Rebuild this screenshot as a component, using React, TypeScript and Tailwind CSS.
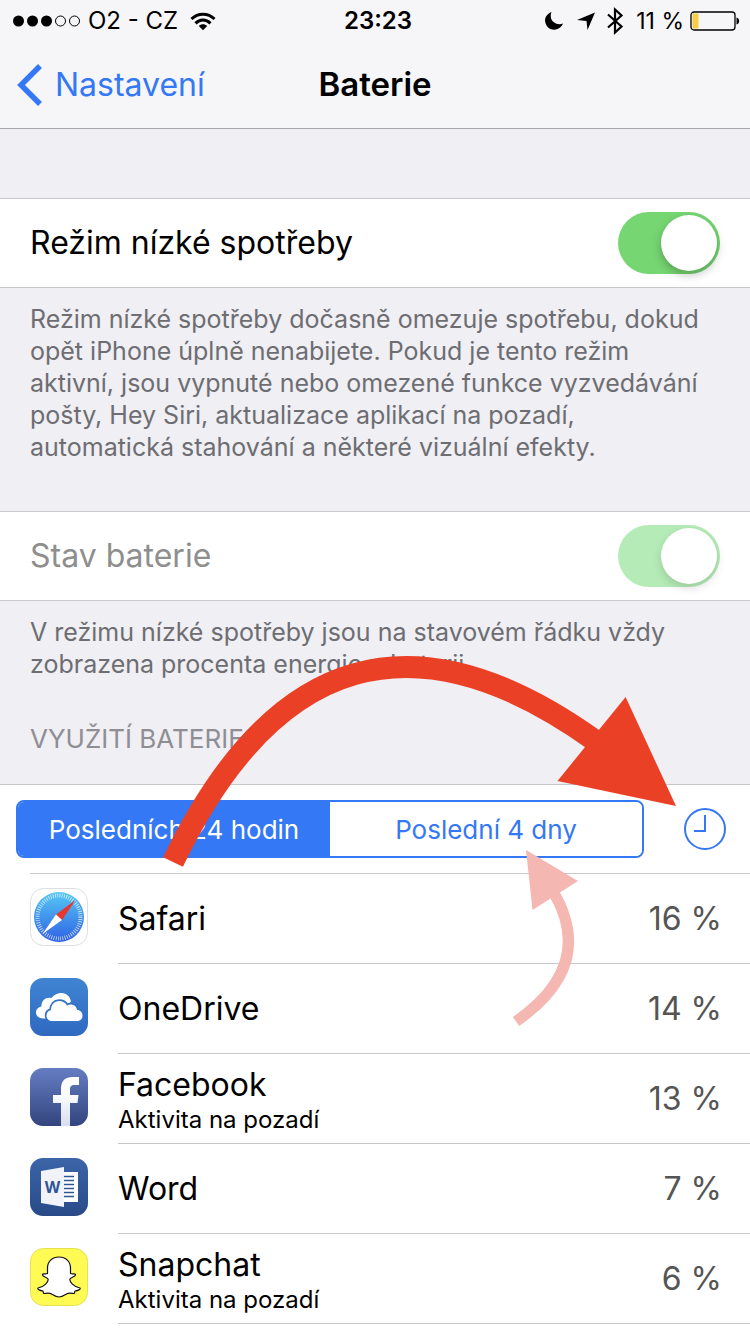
import { useState } from 'react';
import type { ReactNode } from 'react';

type Usage = {
  name: string;
  percent: string;
  background?: boolean;
  icon: ReactNode;
};

function SafariIcon() {
  return (
    <svg viewBox="0 0 58 58" className="size-[58px]" aria-hidden="true">
      <defs>
        <linearGradient id="safari" x1="0" y1="0" x2="0" y2="1">
          <stop offset="0" stopColor="#56c8f5" />
          <stop offset="1" stopColor="#2f61e4" />
        </linearGradient>
      </defs>
      <rect x="0.5" y="0.5" width="57" height="57" rx="13" fill="#fff" stroke="#dedede" />
      <circle cx="29" cy="29" r="25" fill="url(#safari)" />
      <circle cx="29" cy="29" r="21.5" fill="none" stroke="#fff" strokeWidth="4" strokeDasharray="0.75 1.5" opacity="0.8" />
      <path d="M45.5 12 L32 32 L26 26.5 Z" fill="#e8382d" />
      <path d="M12.5 46 L26 26.5 L32 32 Z" fill="#fff" />
    </svg>
  );
}

function OneDriveIcon() {
  return (
    <svg viewBox="0 0 58 58" className="size-[58px]" aria-hidden="true">
      <defs>
        <linearGradient id="onedrive" x1="0" y1="0" x2="0" y2="1">
          <stop offset="0" stopColor="#3f84d3" />
          <stop offset="1" stopColor="#2f69c0" />
        </linearGradient>
      </defs>
      <rect width="58" height="58" rx="13" fill="url(#onedrive)" />
      <path
        d="M13 40.500 C9 40.500 6 38 6 34.500 C6 31 8.500 29 11.500 28.500 C11 22.500 16 18.500 21.500 20 C24 16.500 28 15 31.500 15 C36.500 15 40 18.500 41 23.500 L30 33 L18 40.500 Z"
        fill="#fff"
      />
      <path
        d="M22 43 C18.500 43 16.500 40.500 16.500 37.500 C16.500 34.500 18.500 32.500 21 32 C21 26.500 24.500 23 29 23 C32.500 23 35.500 24.500 37 27.500 C41.500 25 46.500 27.500 47 32 C50.500 32 52.500 34.500 52.500 37.500 C52.500 41 50 43 47 43 Z"
        fill="#fff"
        stroke="#3473c7"
        strokeWidth="3.4"
        paintOrder="stroke"
      />
    </svg>
  );
}

function FacebookIcon() {
  return (
    <svg viewBox="0 0 58 58" className="size-[58px]" aria-hidden="true">
      <defs>
        <linearGradient id="facebook" x1="0" y1="0" x2="0" y2="1">
          <stop offset="0" stopColor="#657dc3" />
          <stop offset="1" stopColor="#33457e" />
        </linearGradient>
        <linearGradient id="facebookF" x1="0" y1="0" x2="0" y2="1">
          <stop offset="0.3" stopColor="#fff" />
          <stop offset="1" stopColor="#d6ddee" />
        </linearGradient>
      </defs>
      <rect width="58" height="58" rx="13" fill="url(#facebook)" />
      <path
        d="M31 58 V35 H23 V27 H31 V21 C31 12.500 35.500 9 42.500 9 H49 V17 H44.500 C41 17 40 18.500 40 21.500 V27 H48.500 L47.500 35 H40 V58 Z"
        fill="url(#facebookF)"
      />
    </svg>
  );
}

function WordIcon() {
  return (
    <svg viewBox="0 0 58 58" className="size-[58px]" aria-hidden="true">
      <defs>
        <linearGradient id="word" x1="0" y1="0" x2="0" y2="1">
          <stop offset="0" stopColor="#3b65a8" />
          <stop offset="1" stopColor="#294a87" />
        </linearGradient>
      </defs>
      <rect width="58" height="58" rx="13" fill="url(#word)" />
      <rect x="33" y="14" width="15" height="30" fill="#fff" />
      <path d="M34 18.500 H44 M34 22.500 H44 M34 26.500 H44 M34 30.500 H44 M34 34.500 H44 M34 38.500 H44" stroke="#2f5597" strokeWidth="1.600" />
      <path d="M11 13 L34 9 V49 L11 45 Z" fill="#f1f3f8" />
      <text x="22.5" y="35" textAnchor="middle" fontSize="16" fontWeight="700" fontFamily="Open Sans, sans-serif" fill="#2f5597">
        W
      </text>
    </svg>
  );
}

function SnapchatIcon() {
  return (
    <svg viewBox="0 0 58 58" className="size-[58px]" aria-hidden="true">
      <rect x="0.5" y="0.5" width="57" height="57" rx="13" fill="#fffb54" stroke="#e5e14c" />
      <path
        d="M29 9 C22 9 17.500 13.500 17.500 20 V25.500 C15.500 26.500 13 25 12.500 26.500 C12 28.500 17 29 18 31 C19 33.500 14 39 8 40 C7 41.500 10 42.500 13 43 C13.500 44 13 45 14 45.500 C16 45.500 19 44.500 21.500 46 C24 47.500 26 49 29 49 C32 49 34 47.500 36.500 46 C39 44.500 42 45.500 44 45.500 C45 45 44.500 44 45 43 C48 42.500 51 41.500 50 40 C44 39 39 33.500 40 31 C41 29 46 28.500 45.500 26.500 C45 25 42.500 26.500 40.500 25.500 V20 C40.500 13.500 36 9 29 9 Z"
        fill="#fff"
        stroke="#111"
        strokeWidth="1.2"
        strokeLinejoin="round"
      />
    </svg>
  );
}

const apps: Usage[] = [
  { name: 'Safari', percent: '16 %', icon: <SafariIcon /> },
  { name: 'OneDrive', percent: '14 %', icon: <OneDriveIcon /> },
  { name: 'Facebook', percent: '13 %', background: true, icon: <FacebookIcon /> },
  { name: 'Word', percent: '7 %', icon: <WordIcon /> },
  { name: 'Snapchat', percent: '6 %', background: true, icon: <SnapchatIcon /> },
];

function StatusBar() {
  return (
    <div className="grid h-[42px] grid-cols-[1fr_auto_1fr] items-center pr-2.5 pl-3 text-2xl">
      <div className="flex items-center gap-2">
        <svg viewBox="0 0 68 12" className="h-3 w-[68px]" aria-hidden="true">
          <circle cx="6.500" cy="6" r="5.500" />
          <circle cx="20.500" cy="6" r="5.500" />
          <circle cx="34.500" cy="6" r="5.500" />
          <circle cx="48.500" cy="6" r="5" fill="none" stroke="#000" />
          <circle cx="62.500" cy="6" r="5" fill="none" stroke="#000" />
        </svg>
        <span>O2 - CZ</span>
        <svg viewBox="0 0 26 19" className="ml-1 h-[19px] w-[26px]" fill="none" stroke="#000" strokeWidth="3" aria-hidden="true">
          <path d="M1.500 7 C8 0.500 18 0.500 24.500 7" />
          <path d="M5.500 11.300 C10 7 16 7 20.500 11.300" />
          <path d="M8.800 14 C11.300 11.600 14.700 11.600 17.200 14 L13 18.300 Z" fill="#000" stroke="none" />
        </svg>
      </div>
      <span className="pl-1 font-semibold">23:23</span>
      <div className="flex items-center justify-end">
        <svg viewBox="0 0 20 20" className="mr-3 size-5" aria-hidden="true">
          <path d="M7.500 1 C2.500 3 0 7.500 1.500 12 C3 17.500 8.500 20 13.500 18 C16.300 16.800 18 15 19 12.500 C16 13.800 12.500 13.500 9.800 11.300 C6.800 8.800 6 4.800 7.500 1 Z" />
        </svg>
        <svg viewBox="0 0 20 20" className="mr-2.5 size-5" aria-hidden="true">
          <path d="M19 1.500 L11.500 19 L10.500 10 L1 9 Z" />
        </svg>
        <svg viewBox="0 0 18 28" className="mr-3 h-7 w-[18px]" fill="none" stroke="#000" strokeWidth="2.200" aria-hidden="true">
          <path d="M2 7.500 L15.500 19.500 L9 25.500 V2.500 L15.500 8.500 L2 20.500" />
        </svg>
        <span className="mr-1.5 text-[23px]">11 %</span>
        <svg viewBox="0 0 50 20" className="h-5 w-[50px]" aria-hidden="true">
          <rect x="1" y="1" width="44" height="18" rx="3" fill="none" stroke="#000" strokeWidth="1.300" />
          <rect x="2.500" y="2.500" width="6" height="15" rx="1" fill="#f8ce46" />
          <path d="M46.500 6.500 C50 7 50 13 46.500 13.500 Z" />
        </svg>
      </div>
    </div>
  );
}

type ToggleRowProps = {
  id: string;
  label: string;
  disabled?: boolean;
};

function ToggleRow({ id, label, disabled }: ToggleRowProps) {
  const [on, setOn] = useState(true);

  return (
    <div className="flex h-[90px] items-center justify-between border-y border-[#c8c7cc] bg-white px-[30px]">
      <label htmlFor={id} className={disabled ? 'text-[32px] text-[#8e8e8e]' : 'text-[32px] text-black'}>
        {label}
      </label>
      <input
        id={id}
        type="checkbox"
        role="switch"
        checked={on}
        disabled={disabled}
        onChange={(e) => setOn(e.target.checked)}
        className="flex h-[62px] w-[102px] shrink-0 appearance-none items-center rounded-full bg-[#e5e5ea] px-[3px] before:size-14 before:rounded-full before:bg-white before:shadow-[0_4px_10px_rgba(0,0,0,0.25)] checked:justify-end checked:bg-[#76d672] disabled:checked:bg-[#b5ebb6] disabled:before:shadow-[0_4px_10px_rgba(0,0,0,0.14)]"
      />
    </div>
  );
}

function UsageRow({ app }: { app: Usage }) {
  return (
    <li className="flex h-[90px] items-center gap-[30px] pl-[30px]">
      <div className="shrink-0 pb-1">{app.icon}</div>
      <div className="flex h-full flex-1 items-center justify-between border-b border-[#c8c7cc] pr-7">
        {app.background ? (
          <div className="pt-1">
            <div className="text-[32px] leading-[38px]">{app.name}</div>
            <div className="text-2xl leading-8">Aktivita na pozadí</div>
          </div>
        ) : (
          <div className="text-[32px] leading-[38px]">{app.name}</div>
        )}
        <span className="text-[32px] text-[#555]">{app.percent}</span>
      </div>
    </li>
  );
}

function Arrows() {
  return (
    <svg viewBox="0 0 750 1334" className="pointer-events-none absolute top-0 left-0 w-full" aria-hidden="true">
      <path d="M173 862 Q325 546 597 742" fill="none" stroke="#ea4126" strokeWidth="22" />
      <path d="M625.600 697 L676 806 L557.500 781 Z" fill="#ea4126" />
      <path d="M516 1021.500 Q596 966 554 893" fill="none" stroke="#f5b7b1" strokeWidth="11" />
      <path d="M526 850 L578 881 L532.500 910 Z" fill="#f5b7b1" />
    </svg>
  );
}

export default function App() {
  const [range, setRange] = useState<'day' | 'days'>('day');

  const segment = (active: boolean) =>
    active ? 'flex-1 bg-[#3478f6] text-white' : 'flex-1 bg-white text-[#3478f6]';

  return (
    <div className="relative min-h-screen bg-[#efeff4] font-['Inter','Liberation_Sans',sans-serif] text-black">
      <header className="border-b border-[#a7a7aa] bg-[#f6f6f8]">
        <StatusBar />
        <div className="grid h-[86px] grid-cols-[1fr_auto_1fr] items-center px-4">
          <a href="#nastaveni" className="flex items-center gap-3 text-[32px] text-[#3478f6]">
            <svg viewBox="0 0 27 42" className="h-[42px] w-[27px]" fill="none" stroke="currentColor" strokeWidth="5.500" aria-hidden="true">
              <path d="M24 2 L5 21 L24 40" />
            </svg>
            Nastavení
          </a>
          <h1 className="text-[33px] font-semibold">Baterie</h1>
        </div>
      </header>

      <main>
        <section className="pt-[69px]">
          <ToggleRow id="low-power" label="Režim nízké spotřeby" />
          <p className="px-[30px] pt-[15px] pb-12 text-[25px] leading-8 text-[#6d6d72]">
            Režim nízké spotřeby dočasně omezuje spotřebu, dokud opět iPhone úplně nenabijete. Pokud je tento režim
            aktivní, jsou vypnuté nebo omezené funkce vyzvedávání pošty, Hey Siri, aktualizace aplikací na pozadí,
            automatická stahování a některé vizuální efekty.
          </p>
        </section>

        <section>
          <ToggleRow id="battery-state" label="Stav baterie" disabled />
          <p className="px-[30px] pt-[15px] text-[25px] leading-8 text-[#6d6d72]">
            V režimu nízké spotřeby jsou na stavovém řádku vždy zobrazena procenta energie v baterii.
          </p>
        </section>

        <section>
          <h2 className="px-[30px] pt-[43px] pb-[29px] text-[26px] leading-8 text-[#8e8e93]">VYUŽITÍ BATERIE</h2>
          <div className="border-t border-[#c8c7cc] bg-white">
            <div className="flex items-center gap-10 py-[15px] pr-6 pl-4">
              <div className="flex h-[58px] flex-1 overflow-hidden rounded-lg border-2 border-[#3478f6] text-[26px]">
                <button type="button" className={segment(range === 'day')} onClick={() => setRange('day')}>
                  Posledních 24 hodin
                </button>
                <button type="button" className={segment(range === 'days')} onClick={() => setRange('days')}>
                  Poslední 4 dny
                </button>
              </div>
              <button type="button" aria-label="Čas využití" className="text-[#3478f6]">
                <svg viewBox="0 0 42 42" className="size-[42px]" fill="none" stroke="currentColor" strokeWidth="2">
                  <circle cx="21" cy="21" r="20" />
                  <path d="M21 7 V23 H10" />
                </svg>
              </button>
            </div>
            <div className="ml-[30px] border-t border-[#c8c7cc]" />
            <ul>
              {apps.map((app) => (
                <UsageRow key={app.name} app={app} />
              ))}
            </ul>
            <div className="h-[10px]" />
          </div>
        </section>
      </main>

      <Arrows />
    </div>
  );
}
